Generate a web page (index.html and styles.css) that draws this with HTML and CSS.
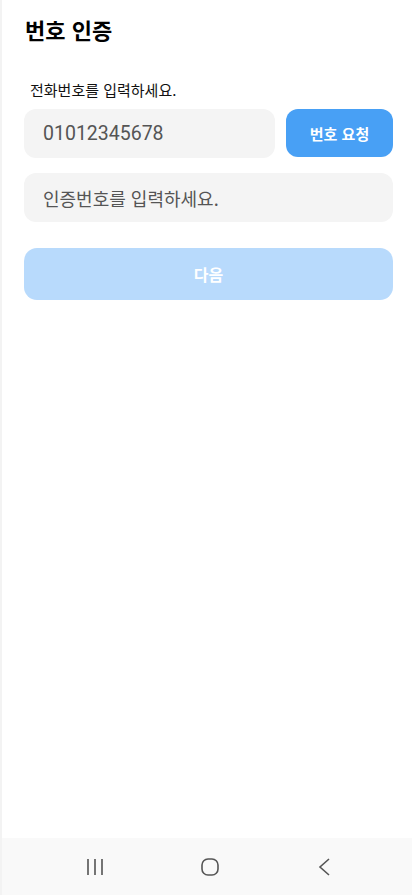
FILE: index.html
```html
<!DOCTYPE html>
<html lang="ko">
<head>
    <meta charset="UTF-8">
    <meta name="viewport" content="width=device-width, initial-scale=1.0">
    <title>번호 인증</title>
    <link rel="stylesheet" href="styles.css">
</head>
<body>
    <div class="screen">
        <main class="content">
            <h1 class="title">번호 인증</h1>
            <p class="label">전화번호를 입력하세요.</p>
            <div class="row">
                <div class="field phone">01012345678</div>
                <button class="btn-request" type="button">번호 요청</button>
            </div>
            <div class="field code placeholder">인증번호를 입력하세요.</div>
            <button class="btn-next" type="button">다음</button>
        </main>
        <nav class="navbar">
            <span class="nav-item">
                <svg width="20" height="20" viewBox="0 0 20 20"><path d="M3 2v16M10 2v16M17 2v16" stroke="#666" stroke-width="1.8" fill="none"/></svg>
            </span>
            <span class="nav-item">
                <svg width="20" height="20" viewBox="0 0 20 20"><rect x="2" y="2" width="16" height="16" rx="6" stroke="#555" stroke-width="1.6" fill="none"/></svg>
            </span>
            <span class="nav-item">
                <svg width="20" height="20" viewBox="0 0 20 20"><path d="M14 2L5 10L14 18" stroke="#555" stroke-width="1.6" fill="none"/></svg>
            </span>
        </nav>
    </div>
</body>
</html>
```

FILE: styles.css
```css
body{
    margin: 0;
    padding: 0;
    background: #fff;
    font-family: "Noto Sans CJK KR", Roboto, sans-serif;
}
.screen{
    height: 895px;
    display: flex;
    flex-direction: column;
    border-left: 2px solid #f3f3f3;
}
.content{
    flex: 1;
    padding: 0 19px 0 22px;
}
.title{
    margin: 0;
    padding-top: 13px;
    padding-left: 1px;
    font-size: 22px;
    line-height: 32px;
    font-weight: 700;
    color: #000;
}
.label{
    margin: 35px 0 0 6px;
    font-size: 15px;
    line-height: 20px;
    color: #111;
}
.row{
    display: flex;
    gap: 11px;
    margin-top: 9px;
}
.field{
    height: 49px;
    border-radius: 12px;
    background: #f4f4f4;
    box-sizing: border-box;
    padding-left: 19px;
    display: flex;
    align-items: center;
    font-size: 18px;
    color: #555;
}
.phone{
    flex: 1;
    font-size: 19.5px;
    font-family: Roboto, "Noto Sans CJK KR", sans-serif;
}
.code{
    margin-top: 15px;
}
.btn-request{
    width: 107px;
    height: 48px;
    border: none;
    border-radius: 12px;
    background: #48a0f5;
    color: #fff;
    font-family: "Noto Sans CJK KR", sans-serif;
    font-size: 15px;
    font-weight: 700;
}
.btn-next{
    display: block;
    width: 100%;
    height: 52px;
    margin-top: 26px;
    border: none;
    border-radius: 13px;
    background: #b8dafc;
    color: #fff;
    font-family: "Noto Sans CJK KR", sans-serif;
    font-size: 16px;
    font-weight: 700;
}
.navbar{
    height: 57px;
    background: #f9f9f9;
    display: flex;
    justify-content: center;
    align-items: center;
    padding-left: 6px;
}
.nav-item{
    display: flex;
    justify-content: center;
    width: 115px;
}
```
